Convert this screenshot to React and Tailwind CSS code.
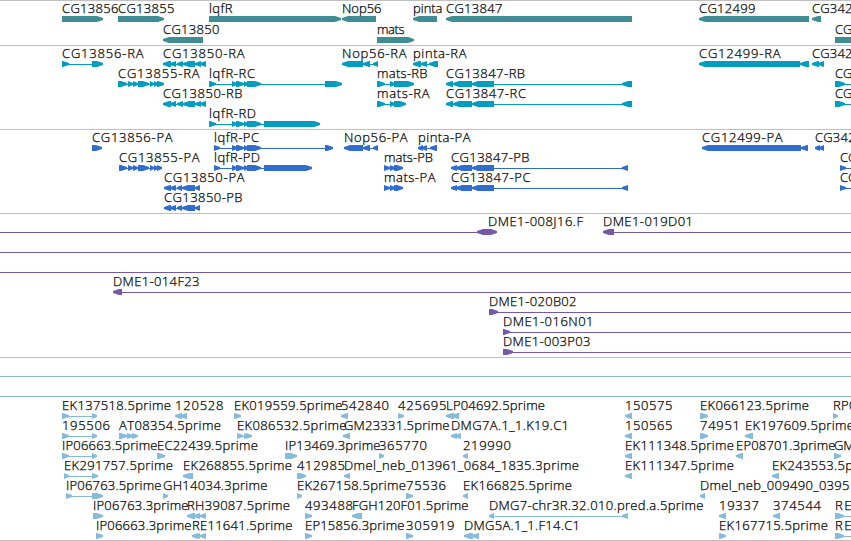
import React from 'react';

// feature: [label, x, label end, direction, exons, line end (optional)]
const exonsCG13850 = [[163, 171], [170, 176], [177, 183], [183, 195], [195, 201], [200, 206]];
const exonsCG13850P = [[164, 171], [170, 176], [177, 182], [182, 195], [195, 200]];
const exonsCG13847 = [[446, 453], [453, 472], [472, 494], [622, 632]];
const exonsCG13847P = [[451, 457], [456, 472], [472, 494], [622, 628]];
const exonsCG13855 = [[128, 133], [133, 138], [138, 149], [150, 154], [154, 158]];
const exonsLqfR = [[232, 237], [236, 244], [244, 248], [247, 261]];

const genes = [
  [
    ['CG13856', 62, 118, 'r', [[62, 103]]],
    ['CG13855', 118, 174, 'r', [[118, 164]]],
    ['lqfR', 209, 232, 'r', [[209, 341]]],
    ['Nop56', 342, 381, 'l', [[342, 376]]],
    ['pinta', 413, 442, 'l', [[413, 437]]],
    ['CG13847', 446, 502, 'l', [[446, 632]]],
    ['CG12499', 699, 755, 'l', [[699, 809]]],
    ['CG342', 812, 852, 'l', [[812, 821]]],
  ],
  [
    ['CG13850', 163, 219, 'l', [[163, 203]]],
    ['mats', 377, 404, 'r', [[377, 414]]],
    ['CG', 835, 852, 'r', [[835, 870]]],
  ],
];

const transcripts = [
  [
    ['CG13856-RA', 62, 143, 'r', [[62, 69], [92, 103]]],
    ['CG13850-RA', 163, 244, 'l', exonsCG13850],
    ['Nop56-RA', 342, 406, 'l', [[342, 363], [363, 370], [373, 378]]],
    ['pinta-RA', 413, 466, 'l', [[413, 421], [421, 427], [429, 438]]],
    ['CG12499-RA', 699, 780, 'l', [[699, 800], [800, 809]]],
    ['CG342', 812, 852, 'l', [[812, 819], [818, 824]]],
  ],
  [
    ['CG13855-RA', 118, 199, 'r', [[118, 127], ...exonsCG13855, [157, 164]]],
    ['lqfR-RC', 209, 254.5, 'r', [[209, 216], ...exonsLqfR, [325, 342]]],
    ['mats-RB', 377, 427, 'r', [[377, 385], [390, 395], [394, 414]]],
    ['CG13847-RB', 446, 524.5, 'l', exonsCG13847],
    ['CG', 835, 852, 'r', [[835, 845]], 860],
  ],
  [
    ['CG13850-RB', 163, 242, 'l', exonsCG13850],
    ['mats-RA', 377, 429, 'r', [[377, 385], [390, 395], [394, 406]]],
    ['CG13847-RC', 446, 525.5, 'l', exonsCG13847],
    ['CG', 835, 852, 'r', [[835, 845]], 860],
  ],
  [['lqfR-RD', 209, 255.5, 'r', [[209, 216], ...exonsLqfR, [264, 320]]]],
];

const proteins = [
  [
    ['CG13856-PA', 92, 172, 'r', [[92, 102]]],
    ['lqfR-PC', 214, 258.5, 'r', [[214, 220], ...exonsLqfR, [325, 333]]],
    ['Nop56-PA', 344, 407, 'l', [[344, 363], [363, 370], [373, 378]]],
    ['pinta-PA', 418, 470, 'l', [[418, 423], [422, 427], [430, 437]]],
    ['CG12499-PA', 702, 782, 'l', [[702, 801], [801, 808]]],
    ['CG342', 815, 855, 'l', [[815, 820], [819, 824]]],
  ],
  [
    ['CG13855-PA', 119, 199, 'r', [[119, 127], ...exonsCG13855, [157, 162]]],
    ['lqfR-PD', 214, 259.5, 'r', [[214, 220], ...exonsLqfR, [264, 312]]],
    ['mats-PB', 384, 432.5, 'r', [[384, 390], [390, 395], [394, 403]]],
    ['CG13847-PB', 451, 529, 'l', exonsCG13847P],
    ['CG', 840, 857, 'r', [[840, 846]], 860],
  ],
  [
    ['CG13850-PA', 164, 244, 'l', exonsCG13850P],
    ['mats-PA', 384, 435, 'r', [[384, 390], [390, 395], [394, 403]]],
    ['CG13847-PC', 451, 530, 'l', exonsCG13847P],
    ['CG', 840, 857, 'r', [[840, 846]], 860],
  ],
  [['CG13850-PB', 164, 242, 'l', exonsCG13850P]],
];

const clones = [
  [
    ['', 0, 0, 'both', [[477, 497]], 497],
    ['DME1-008J16.F', 488, 582.5, 'l', []],
    ['DME1-019D01', 603, 692.5, 'l', [[603, 614]], 860],
  ],
  [['', 0, 0, 'r', [], 860]],
  [['', 0, 0, 'r', [], 860]],
  [['DME1-014F23', 113, 199, 'l', [[113, 122]], 860]],
  [['DME1-020B02', 489, 576, 'r', [[489, 498]], 860]],
  [['DME1-016N01', 503, 593, 'r', [[503, 510]], 860]],
  [['DME1-003P03', 503, 590, 'r', [[503, 513]], 860]],
];

const contigs = [[['', 0, 0, 'r', [], 860]], [['', 0, 0, 'r', [], 860]]];

const ests = [
  [
    ['EK137518.5prime', 62, 170.5, 'r', [[62, 69], [92, 97]]],
    ['120528', 175, 223, 'l', [[175, 182], [180, 187]]],
    ['EK019559.5prime', 234, 342, 'r', [[234, 241]]],
    ['542840', 341, 388.5, 'l', [[341, 348]]],
    ['425695', 398, 446, 'r', [[398, 404]]],
    ['LP04692.5prime', 446, 544.5, 'l', [[446, 454], [452, 459]]],
    ['150575', 625, 672, 'l', [[625, 632]]],
    ['EK066123.5prime', 700, 808.5, 'r', [[700, 708]]],
    ['RP0', 833, 856, 'r', [[833, 838]]],
  ],
  [
    ['195506', 62, 109.5, 'r', [[62, 69], [92, 97]]],
    ['AT08354.5prime', 119, 220.5, 'r', [[119, 127], [127, 133], [132, 138]]],
    ['EK086532.5prime', 237, 346, 'r', [[237, 243], [244, 248], [246, 252]]],
    ['GM23331.5prime', 344, 449, 'l', [[343, 350]]],
    ['DMG7A.1_1.K19.C1', 451, 568.5, 'l', [[451, 457], [455, 461]]],
    ['150565', 625, 672, 'l', [[625, 632]]],
    ['74951', 700, 739.5, 'r', [[700, 708]]],
    ['EK197609.5prime', 745, 853.5, 'l', [[745, 753]]],
  ],
  [
    ['IP06663.5prime', 62, 157, 'r', [[62, 69], [92, 97]]],
    ['EC22439.5prime', 157, 257.5, 'r', [[157, 165]]],
    ['IP13469.3prime', 285, 380, 'r', [[285, 297]]],
    ['365770', 379, 426.5, 'r', [[379, 384]]],
    ['219990', 463, 510.5, 'l', [[463, 468]]],
    ['EK111348.5prime', 625, 733.5, 'l', [[625, 632]]],
    ['EP08701.3prime', 736, 835, 'l', [[736, 743]]],
    ['GM', 834, 854, 'r', [[834, 841]]],
  ],
  [
    ['EK291757.5prime', 64, 172.5, 'r', [[64, 69], [92, 98]]],
    ['EK268855.5prime', 183, 291.5, 'l', [[183, 193]]],
    ['412985', 297, 344.5, 'r', [[297, 306]]],
    ['Dmel_neb_013961_0684_1835.3prime', 344, 578.5, 'l', [[344, 350]]],
    ['EK111347.5prime', 625, 733.5, 'l', [[625, 632]]],
    ['EK243553.5prime', 772, 880.5, 'l', [[772, 779]]],
  ],
  [
    ['IP06763.5prime', 66, 161, 'r', [[66, 72], [92, 103]]],
    ['GH14034.3prime', 163, 267, 'r', [[163, 168]]],
    ['EK267158.5prime', 297, 405.5, 'r', [[297, 302]]],
    ['75536', 406, 445.5, 'r', [[406, 413]]],
    ['EK166825.5prime', 463, 571.5, 'l', [[463, 468]]],
    ['Dmel_neb_009490_0395', 700, 849, 'l', [[700, 705]]],
  ],
  [
    ['IP06763.3prime', 93, 188, 'r', [[93, 103]]],
    ['RH39087.5prime', 187, 289.5, 'l', [[187, 195], [194, 200], [200, 206]]],
    ['493488', 305, 352.5, 'r', [[305, 312]]],
    ['FGH120F01.5prime', 352, 468, 'l', [[352, 362]]],
    ['DMG7-chr3R.32.010.pred.a.5prime', 489, 703, 'l', [[489, 494], [622, 628]]],
    ['19337', 719, 758.5, 'l', [[719, 726]]],
    ['374544', 773, 820.5, 'l', [[773, 780]]],
    ['RE', 835, 851, 'r', [[835, 844]], 860],
  ],
  [
    ['IP06663.3prime', 96, 191, 'r', [[96, 103]]],
    ['RE11641.5prime', 192, 292, 'l', [[192, 198], [196, 200], [200, 206]]],
    ['EP15856.3prime', 305, 404, 'r', [[305, 312]]],
    ['305919', 406, 454, 'r', [[406, 413]]],
    ['DMG5A.1_1.F14.C1', 464, 579.5, 'l', [[464, 473], [472, 479]]],
    ['EK167715.5prime', 719, 827.5, 'r', [[719, 726]]],
    ['RE', 835, 851, 'r', [[835, 844]], 860],
  ],
];

const HEAD = 6;

// arrow heads end in a blunt tip
const exonPoints = (x0, x1, dir) => {
  const head = Math.min(HEAD, x1 - x0);
  if (dir === 'both') {
    return `${x0},2 ${x0 + HEAD},0 ${x1 - HEAD},0 ${x1},2 ${x1},4 ${x1 - HEAD},6 ${x0 + HEAD},6 ${x0},4`;
  }
  if (dir === 'l') {
    return `${x0},2 ${x0 + head},0 ${x1},0 ${x1},6 ${x0 + head},6 ${x0},4`;
  }
  return `${x0},0 ${x1 - head},0 ${x1},2 ${x1},4 ${x1 - head},6 ${x0},6`;
};

const Feature = ({ feature }) => {
  const [label, x, labelEnd, dir, exons, lineEnd] = feature;
  const end = lineEnd || (exons.length ? exons[exons.length - 1][1] : x);
  return (
    <g>
      {end > x && <rect x={x} y={3} width={end - x} height={1} shapeRendering="crispEdges" />}
      {exons.map(([x0, x1], i) => (
        <polygon key={i} points={exonPoints(x0, x1, dir)} />
      ))}
      {label && (
        <text x={x} y={-3} textLength={labelEnd - x + 0.5} className="fill-black stroke-black stroke-[0.25px]">
          {label}
        </text>
      )}
    </g>
  );
};

const Track = ({ rows, pitch = 20, className }) => (
  <div className={`w-full ${className}`}>
    <svg className="block w-full h-full overflow-visible text-[13px] font-light font-['Open_Sans',sans-serif]" fill="currentColor">
      {rows.map((row, i) => (
        <g key={i} transform={`translate(0 ${15 + i * pitch})`}>
          {row.map((feature, j) => (
            <Feature key={j} feature={feature} />
          ))}
        </g>
      ))}
    </svg>
  </div>
);

export default function App() {
  return (
    <div className="w-[851px] h-[541px] flex flex-col bg-white overflow-hidden">
      <Track rows={genes} pitch={21} className="h-[45px] border-t border-[#c0c0c0] text-[#3f8c93]" />
      <Track rows={transcripts} className="h-[84px] border-t border-[#c0c0c0] text-[#009dbf]" />
      <Track rows={proteins} className="h-[84px] border-t border-[#c0c0c0] text-[#316dcd]" />
      <Track rows={clones} className="h-[144px] border-t border-[#c0c0c0] text-[#7658a8]" />
      <Track rows={contigs} className="h-[40px] border-t border-[#c0c0c0] text-[#86bbdc]" />
      <Track rows={ests} className="h-[144px] pt-px border-b border-[#c0c0c0] text-[#86bbdc]" />
    </div>
  );
}
